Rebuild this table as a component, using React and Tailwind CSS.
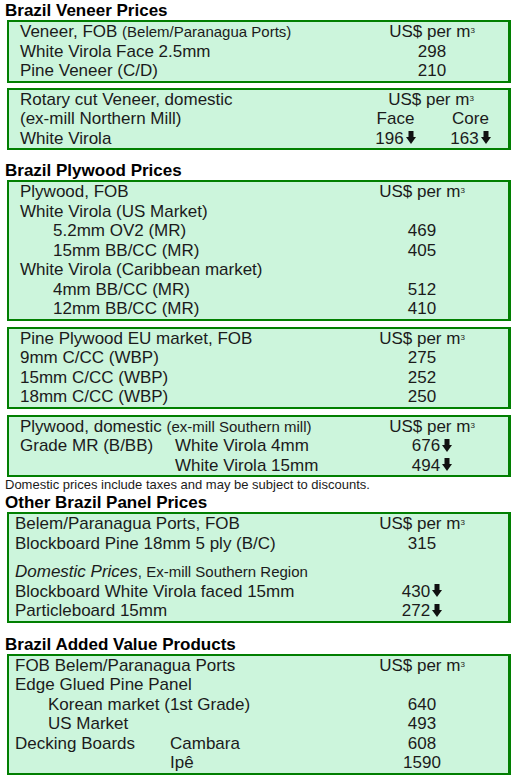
import React from 'react'

// ── Small pieces ──────────────────────────────────────────────────────────────

function DownArrow() {
  return (
    <svg width="10" height="13" viewBox="0 0 10 13" className="inline-block ml-[2px] -mt-[3px] align-middle">
      <rect x="2.5" y="0" width="5" height="6.5" fill="#111" />
      <polygon points="0,6 10,6 5,13" fill="#111" />
    </svg>
  )
}

function Unit() {
  return (
    <span>
      US$ per m<sup className="text-[8px] relative -top-[4px]">3</sup>
    </span>
  )
}

function Title({ children, className = '' }) {
  return <h2 className={`font-bold text-[17px] leading-[19px] pl-[5px] text-black ${className}`}>{children}</h2>
}

function Box({ children, className = '' }) {
  return (
    <div
      className={`ml-[7px] w-[504px] bg-[#ccf5dc] border-2 border-r-[3px] border-t-[2px] border-[#017f01] text-[17px] leading-[19.5px] text-[#1b1b1b] ${className}`}
    >
      {children}
    </div>
  )
}

// label on the left, value centred in a 100px cell
function Row({ label, value, indent, pr = 'pr-[26px]', pl = 'pl-[11px]' }) {
  return (
    <div className={`flex ${pr} ${pl}`}>
      <div className={`flex-1 whitespace-nowrap ${indent ? 'pl-[33px]' : ''}`}>{label}</div>
      <div className="w-[100px] text-center whitespace-nowrap">{value}</div>
    </div>
  )
}

// ── Sections ──────────────────────────────────────────────────────────────────

function Veneer() {
  return (
    <>
      <Title className="mt-[1px]">Brazil Veneer Prices</Title>
      <Box>
        <Row
          label={<>Veneer, FOB <span className="text-[15px]">(Belem/Paranagua Ports)</span></>}
          value={<Unit />}
        />
        <Row label="White Virola Face 2.5mm" value="298" />
        <Row label="Pine Veneer (C/D)" value="210" />
      </Box>
      <Box className="mt-[5px]">
        <div className="flex pl-[11px]">
          <div className="flex-1">Rotary cut Veneer, domestic</div>
          <div className="w-[150px] text-center pr-[4px]"><Unit /></div>
        </div>
        <div className="flex pl-[11px]">
          <div className="flex-1">(ex-mill Northern Mill)</div>
          <div className="w-[75px] text-center">Face</div>
          <div className="w-[75px] text-center">Core</div>
        </div>
        <div className="flex pl-[11px]">
          <div className="flex-1">White Virola</div>
          <div className="w-[75px] text-center">196<DownArrow /></div>
          <div className="w-[75px] text-center">163<DownArrow /></div>
        </div>
      </Box>
    </>
  )
}

function Plywood() {
  const pr = 'pr-[36px]'
  return (
    <>
      <Title className="mt-[11px]">Brazil Plywood Prices</Title>
      <Box>
        <Row pr={pr} label="Plywood, FOB" value={<Unit />} />
        <Row pr={pr} label="White Virola (US Market)" value="" />
        <Row pr={pr} indent label="5.2mm OV2 (MR)" value="469" />
        <Row pr={pr} indent label="15mm BB/CC (MR)" value="405" />
        <Row pr={pr} label="White Virola (Caribbean market)" value="" />
        <Row pr={pr} indent label="4mm BB/CC (MR)" value="512" />
        <Row pr={pr} indent label="12mm BB/CC (MR)" value="410" />
      </Box>
      <Box className="mt-[6px]">
        <Row pr={pr} label="Pine Plywood EU market, FOB" value={<Unit />} />
        <Row pr={pr} label="9mm C/CC (WBP)" value="275" />
        <Row pr={pr} label="15mm C/CC (WBP)" value="252" />
        <Row pr={pr} label="18mm C/CC (WBP)" value="250" />
      </Box>
      <Box className="mt-[6px]">
        <Row
          label={<>Plywood, domestic <span className="text-[15px]">(ex-mill Southern mill)</span></>}
          value={<Unit />}
        />
        <Row
          label={
            <div className="flex">
              <span className="w-[155px]">Grade MR (B/BB)</span>
              <span>White Virola 4mm</span>
            </div>
          }
          value={<>676<DownArrow /></>}
        />
        <Row
          label={<div className="pl-[155px]">White Virola 15mm</div>}
          value={<>494<DownArrow /></>}
        />
      </Box>
      <p className="text-[13px] leading-[16px] pl-[5px] text-[#1b1b1b]">
        Domestic prices include taxes and may be subject to discounts.
      </p>
    </>
  )
}

function Panels() {
  const pr = 'pr-[36px]'
  const pl = 'pl-[6px]'
  return (
    <>
      <Title>Other Brazil Panel Prices</Title>
      <Box>
        <Row pr={pr} pl={pl} label="Belem/Paranagua Ports, FOB" value={<Unit />} />
        <Row pr={pr} pl={pl} label="Blockboard Pine 18mm 5 ply (B/C)" value="315" />
        <div className="h-[9px]" />
        <Row
          pr={pr}
          pl={pl}
          label={<><i>Domestic Prices</i><span className="text-[15px]">, Ex-mill Southern Region</span></>}
          value=""
        />
        <Row pr={pr} pl={pl} label="Blockboard White Virola faced 15mm" value={<>430<DownArrow /></>} />
        <Row pr={pr} pl={pl} label="Particleboard 15mm" value={<>272<DownArrow /></>} />
      </Box>
    </>
  )
}

function AddedValue() {
  const pr = 'pr-[36px]'
  const pl = 'pl-[6px]'
  return (
    <>
      <Title className="mt-[12px]">Brazil Added Value Products</Title>
      <Box>
        <Row pr={pr} pl={pl} label="FOB Belem/Paranagua Ports" value={<Unit />} />
        <Row pr={pr} pl={pl} label="Edge Glued Pine Panel" value="" />
        <Row pr={pr} pl={pl} indent label="Korean market (1st Grade)" value="640" />
        <Row pr={pr} pl={pl} indent label="US Market" value="493" />
        <Row
          pr={pr}
          pl={pl}
          label={
            <div className="flex">
              <span className="w-[155px]">Decking Boards</span>
              <span>Cambara</span>
            </div>
          }
          value="608"
        />
        <Row pr={pr} pl={pl} label={<div className="pl-[155px]">Ipê</div>} value="1590" />
      </Box>
    </>
  )
}

// ── App root ──────────────────────────────────────────────────────────────────

export default function App() {
  return (
    <div className="w-[519px] h-[781px] bg-white overflow-hidden" style={{ fontFamily: '"Liberation Sans", Arial, sans-serif' }}>
      <Veneer />
      <Plywood />
      <Panels />
      <AddedValue />
    </div>
  )
}
